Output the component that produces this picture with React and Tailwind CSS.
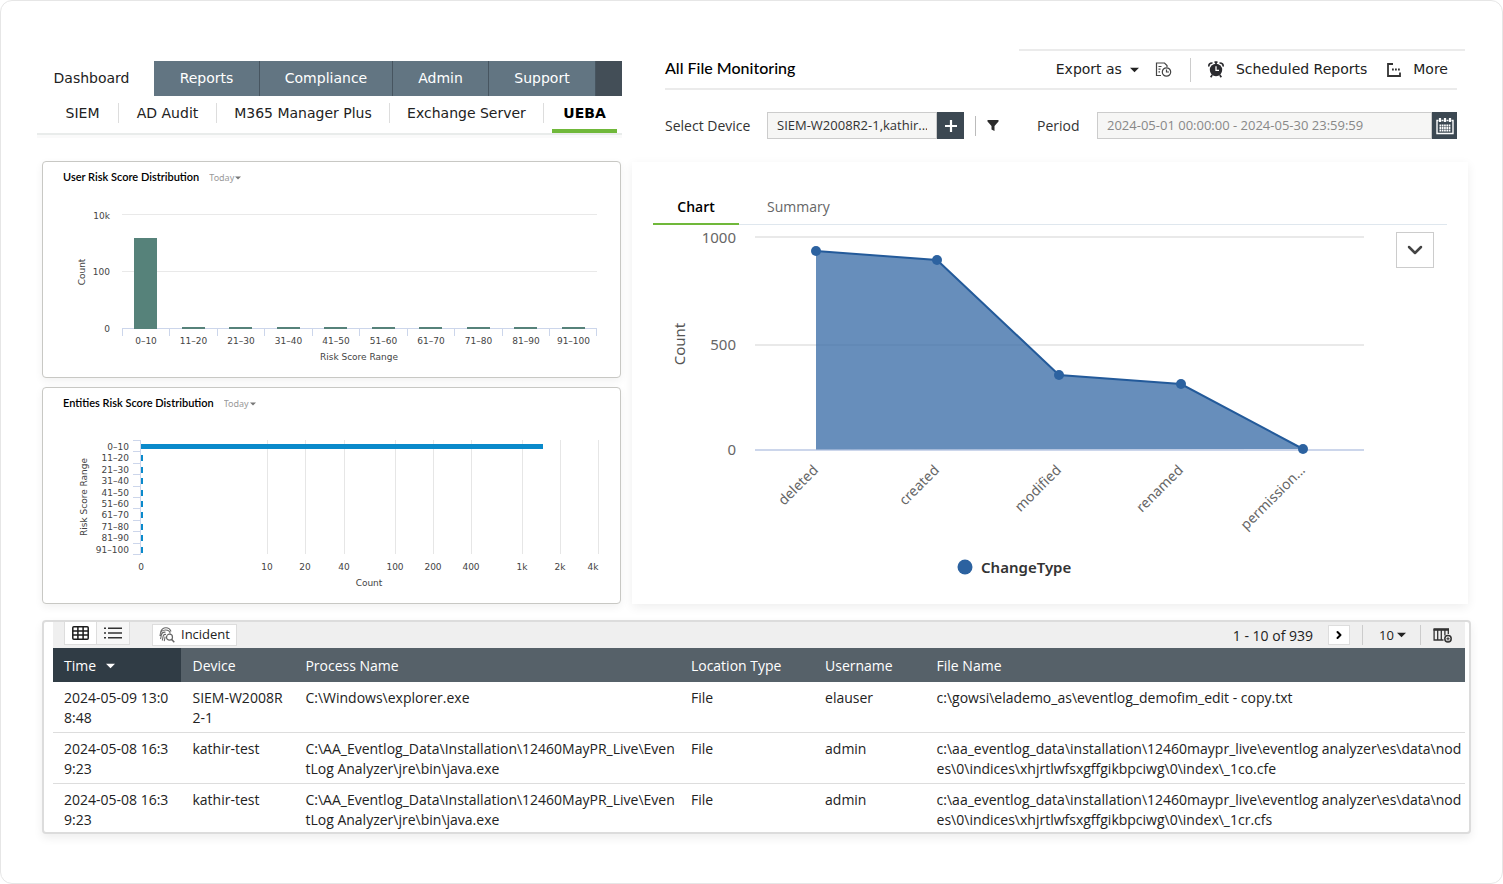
import React from 'react';
import { ChevronDown, ChevronRight } from 'lucide-react';

const mainTabs = ['Reports', 'Compliance', 'Admin', 'Support'];
const subTabs = ['SIEM', 'AD Audit', 'M365 Manager Plus', 'Exchange Server'];

const ranges = ['0–10', '11–20', '21–30', '31–40', '41–50', '51–60', '61–70', '71–80', '81–90', '91–100'];

const entityTicks = [
  { label: '10', x: 224 },
  { label: '20', x: 262 },
  { label: '40', x: 301 },
  { label: '100', x: 352 },
  { label: '200', x: 390 },
  { label: '400', x: 428 },
  { label: '1k', x: 479 },
  { label: '2k', x: 517 },
  { label: '4k', x: 555, labelX: 550 },
];

const changePoints = [
  { label: 'deleted', x: 184, y: 26 },
  { label: 'created', x: 305, y: 35 },
  { label: 'modified', x: 427, y: 150 },
  { label: 'renamed', x: 549, y: 159 },
  { label: 'permission...', x: 671, y: 224 },
];

const columns = ['Time', 'Device', 'Process Name', 'Location Type', 'Username', 'File Name'];

const rows = [
  ['2024-05-09 13:08:48', 'SIEM-W2008R2-1', 'C:\\Windows\\explorer.exe', 'File', 'elauser', 'c:\\gowsi\\elademo_as\\eventlog_demofim_edit - copy.txt'],
  ['2024-05-08 16:39:23', 'kathir-test', 'C:\\AA_Eventlog_Data\\Installation\\12460MayPR_Live\\EventLog Analyzer\\jre\\bin\\java.exe', 'File', 'admin', 'c:\\aa_eventlog_data\\installation\\12460maypr_live\\eventlog analyzer\\es\\data\\nodes\\0\\indices\\xhjrtlwfsxgffgikbpciwg\\0\\index\\_1co.cfe'],
  ['2024-05-08 16:39:23', 'kathir-test', 'C:\\AA_Eventlog_Data\\Installation\\12460MayPR_Live\\EventLog Analyzer\\jre\\bin\\java.exe', 'File', 'admin', 'c:\\aa_eventlog_data\\installation\\12460maypr_live\\eventlog analyzer\\es\\data\\nodes\\0\\indices\\xhjrtlwfsxgffgikbpciwg\\0\\index\\_1cr.cfs'],
];

const Caret = ({ className }) => (
  <svg viewBox="0 0 10 6" className={className} fill="currentColor" aria-hidden="true">
    <path d="M0 0.5h10L5 5.5z" />
  </svg>
);

const ExportHistoryIcon = () => (
  <svg viewBox="0 0 17 16" className="w-[17px] h-4" fill="none" stroke="#444" strokeWidth="1.2" aria-hidden="true">
    <path d="M12 5V3.5L9.5 1H1.5v12.500H6" />
    <path d="M3.500 4.500h3M3.500 7.200h2M3.500 9.900h1.500" />
    <circle cx="11.500" cy="10" r="4.200" />
    <path d="M11.500 7.500V10H14" />
  </svg>
);

const AlarmIcon = () => (
  <svg viewBox="0 0 16 17" className="w-4 h-[17px]" aria-hidden="true">
    <circle cx="8" cy="9" r="6.200" fill="#2b2b2f" />
    <path d="M1 5.500C0.500 3.500 2 1.800 4.500 2M15 5.500c0.500-2-1-3.700-3.500-3.500M6.500 1.200h3" fill="none" stroke="#2b2b2f" strokeWidth="1.700" />
    <path d="M4.200 14l-1.500 2.200M11.800 14l1.500 2.200M8 1v2" stroke="#2b2b2f" strokeWidth="1.700" />
    <path d="M8 5.200V9.300h3" fill="none" stroke="#fff" strokeWidth="1.300" />
  </svg>
);

const MoreIcon = () => (
  <svg viewBox="0 0 14 14" className="w-3.5 h-3.5" fill="none" stroke="#333" strokeWidth="1.800" aria-hidden="true">
    <path d="M6 1H1v12h12V9.500" />
    <path d="M5 6.500h1.800M8 6.500h1.800M11 6.500h1.800" strokeWidth="2" />
  </svg>
);

const CalendarIcon = () => (
  <svg viewBox="0 0 18 18" className="w-[18px] h-[18px]" fill="none" stroke="#fff" aria-hidden="true">
    <path d="M2.500 3.500H1v13h16v-13h-1.500M5.500 3.500h2M10.500 3.500h2" strokeWidth="1.400" />
    <path d="M4 1v4M9 1v4M14 1v4" strokeWidth="2.200" />
    <path d="M3.500 8.500h11M3.500 11h11M3.500 13.500h11" strokeWidth="2" strokeDasharray="1.700 0.600" />
  </svg>
);

const GridIcon = () => (
  <svg viewBox="0 0 17 14" className="w-[17px] h-3.5" fill="none" stroke="#1c1c1c" strokeWidth="1.500" aria-hidden="true">
    <rect x="0.800" y="0.800" width="15.400" height="12.400" rx="1" />
    <path d="M1 4.900h15M1 9h15M5.900 1v12M11.100 1v12" />
  </svg>
);

const ListIcon = () => (
  <svg viewBox="0 0 18 12" className="w-[18px] h-3" fill="none" stroke="#333" strokeWidth="1.600" aria-hidden="true">
    <path d="M0 1.200h2M0 6h2M0 10.800h2M4 1.200h14M4 6h14M4 10.800h14" />
  </svg>
);

const IncidentIcon = () => (
  <svg viewBox="0 0 16 16" className="w-4 h-4" fill="none" stroke="#666" strokeWidth="1.100" aria-hidden="true">
    <path d="M1.500 5.500C2.500 2 5 0.800 7 0.800s4 1 5 3.700M1 9c0-4 2.500-6 5.500-6S11 5 11.200 6.500M1.500 12c0.600-1.500 0.500-3 0.800-4C2.800 6 4.500 5 6.500 5.200M3.200 13.500c0.800-2 0.600-4 1.200-5C5 7.500 6 7.300 7 7.500M5.200 14.200c0.400-1.200 0.600-3 0.900-4.500" />
    <circle cx="10.500" cy="10.200" r="3" fill="#fff" strokeWidth="1.200" />
    <path d="M12.700 12.400l2.600 2.800" strokeWidth="1.500" />
  </svg>
);

const ColumnsIcon = () => (
  <svg viewBox="0 0 20 15" className="w-5 h-[15px]" fill="none" stroke="#333" strokeWidth="1.300" aria-hidden="true">
    <path d="M0.500 1.500h15.500" strokeWidth="2.600" />
    <path d="M1.100 1v11h9.400M4.700 2v10M8.300 2v10M11.900 2v5.500M15.300 2v4" />
    <circle cx="15" cy="10.800" r="3.200" strokeWidth="1.500" />
    <path d="M15 9.200v3.200M13.400 10.800h3.200" strokeWidth="1.100" />
  </svg>
);

const TodaySelect = ({ id }) => (
  <div className="relative flex items-center pt-0.5">
    <select id={id} aria-label="Time range" className="appearance-none w-9 h-4 font-['Noto_Sans',sans-serif] text-[9px] leading-4 text-[#999]">
      <option>Today</option>
    </select>
    <Caret className="absolute right-1 w-1.5 h-1 text-[#777] pointer-events-none" />
  </div>
);

const WidgetCard = ({ id, title, children }) => (
  <section className="bg-white border border-[#c8c8c4] rounded-sm shadow-[0_3px_8px_rgba(0,0,0,0.06)]">
    <div className="flex items-center gap-2.5 h-[30px] pl-5">
      <h2 className="font-['Lato',sans-serif] text-[11px] font-semibold text-black">{title}</h2>
      <TodaySelect id={id} />
    </div>
    {children}
  </section>
);

const UserRiskChart = () => (
  <svg viewBox="0 0 577 185" className="block w-full h-auto font-['DejaVu_Sans',sans-serif] text-[9px]" fill="#444">
    <path d="M79 22.500h475M79 79.500h475" stroke="#e9e9e9" />
    <path d="M79 136.500h475" stroke="#ccd6eb" />
    {ranges.map((range, i) => {
      const x = 79 + i * 47.5;
      return (
        <g key={range}>
          <path d={`M${Math.floor(x) + 0.5} 137v7`} stroke="#ccd6eb" />
          <rect x={Math.floor(x + 12.5)} y={i === 0 ? 46 : 135} width="23" height={i === 0 ? 91 : 2} fill="#56827a" />
          <text x={x + 24} y="152" textAnchor="middle">{range}</text>
        </g>
      );
    })}
    <path d="M553.500 137v7" stroke="#ccd6eb" />
    <text x="67" y="27" textAnchor="end">10k</text>
    <text x="67" y="83" textAnchor="end">100</text>
    <text x="67" y="140" textAnchor="end">0</text>
    <text transform="translate(42 80) rotate(-90)" textAnchor="middle">Count</text>
    <text x="316" y="168" textAnchor="middle">Risk Score Range</text>
  </svg>
);

const EntityRiskChart = () => (
  <svg viewBox="0 0 577 185" className="block w-full h-auto font-['DejaVu_Sans',sans-serif] text-[9px]" fill="#444">
    {entityTicks.map(({ label, x, labelX }) => (
      <g key={label}>
        <path d={`M${x + 0.5} 22v114`} stroke="#e6e6e6" />
        <text x={labelX || x} y="152" textAnchor="middle">{label}</text>
      </g>
    ))}
    <path d="M97.500 22v115" stroke="#ccd6eb" />
    {ranges.map((range, i) => {
      const y = 22 + i * 11.4;
      return (
        <g key={range}>
          <path d={`M90 ${Math.round(y) + 0.5}h8`} stroke="#ccd6eb" />
          <text x="86" y={y + 10} textAnchor="end">{range}</text>
          <rect x="98" y={Math.round(y + 4)} width={i === 0 ? 402 : 2} height={i === 0 ? 5 : 6} fill="#0a8acb" />
        </g>
      );
    })}
    <path d="M90 136.500h8" stroke="#ccd6eb" />
    <text x="98" y="152" textAnchor="middle">0</text>
    <text transform="translate(44 79) rotate(-90)" textAnchor="middle">Risk Score Range</text>
    <text x="326" y="168" textAnchor="middle">Count</text>
  </svg>
);

const ChangeTypeChart = () => {
  const line = changePoints.map(({ x, y }) => `${x},${y}`).join(' ');
  return (
    <svg viewBox="0 0 836 378" className="block w-full h-auto font-['Noto_Sans',sans-serif] text-[15px]" fill="#666">
      <path d="M123 12h609M123 120h609" stroke="#e9e9e9" strokeWidth="2" />
      <path d="M123 225h609" stroke="#ccd6eb" strokeWidth="2" />
      <polygon points={`184,224.500 ${line}`} fill="#3468a4" fillOpacity="0.75" />
      <polyline points={line} fill="none" stroke="#235a9a" strokeWidth="2" />
      {changePoints.map(({ label, x, y }) => (
        <g key={label}>
          <circle cx={x} cy={y} r="5" fill="#2c62a0" />
          <text transform={`translate(${x + 3} 246) rotate(-45)`} textAnchor="end" className="text-[14px]">{label}</text>
        </g>
      ))}
      <text x="104" y="18" textAnchor="end">1000</text>
      <text x="104" y="125" textAnchor="end">500</text>
      <text x="104" y="230" textAnchor="end">0</text>
      <text transform="translate(53 119) rotate(-90)" textAnchor="middle" fill="#555">Count</text>
      <circle cx="333" cy="342" r="7.500" fill="#2c62a0" />
      <text x="349" y="348" className="font-semibold" fill="#333">ChangeType</text>
    </svg>
  );
};

const Navigation = () => (
  <nav className="mt-3 font-['DejaVu_Sans',sans-serif] text-[14px]">
    <div className="grid grid-cols-[117fr_106fr_133fr_96fr_107fr_26fr] h-[35px] text-center leading-[34px]">
      <a href="#dashboard" className="pr-2 text-[#222]">Dashboard</a>
      {mainTabs.map((tab) => (
        <a key={tab} href={`#${tab}`} className="bg-[#627582] border-r border-[#475560] text-white">{tab}</a>
      ))}
      <div className="bg-[#434e57]"></div>
    </div>
    <div className="grid grid-cols-[82fr_98fr_173fr_154fr_73fr_5fr] items-center h-[39px] border-b-2 border-[#e9eceb] text-center text-[#222] shadow-[0_3px_1px_rgba(0,0,0,0.02)]">
      {subTabs.map((tab) => (
        <a key={tab} href={`#${tab}`} className="mb-1 border-r border-[#ddd] leading-5 first:pl-2.5">{tab}</a>
      ))}
      <a href="#UEBA" className="self-end ml-2 h-[37px] leading-[34px] border-b-4 border-[#70b83a] font-bold text-black">UEBA</a>
    </div>
  </nav>
);

const ReportHeader = () => (
  <div>
    <div className="ml-auto w-[446px] border-t-2 border-[#ebebeb]"></div>
    <div className="flex items-center justify-between h-[39px] mr-2 border-b-2 border-[#ebebeb]">
      <h1 className="pb-1 font-['Lato',sans-serif] text-[16px] font-medium text-black">All File Monitoring</h1>
      <div className="flex items-center mr-[9px] font-['DejaVu_Sans',sans-serif] text-[14px] text-[#222]">
        <button className="flex items-center gap-2">
          Export as
          <Caret className="w-[9px] h-1.5" />
        </button>
        <button aria-label="Export history" className="ml-4"><ExportHistoryIcon /></button>
        <span className="w-px h-6 ml-[18px] mr-[17px] bg-[#ccc]"></span>
        <button className="flex items-center gap-3"><AlarmIcon />Scheduled Reports</button>
        <button className="flex items-center gap-3 ml-5"><MoreIcon />More</button>
      </div>
    </div>
    <div className="flex items-center h-[27px] mt-[22px] mr-2 font-['Open_Sans',sans-serif] text-[14px] text-[#333]">
      <label htmlFor="device" className="w-[102px] shrink-0">Select Device</label>
      <input id="device" readOnly value="SIEM-W2008R2-1,kathir..." className="w-[170px] h-full px-[9px] pb-0.5 bg-[#f6f6f5] border border-[#ccc] text-[13px]" />
      <button aria-label="Add device" className="flex items-center justify-center w-[27px] h-full bg-[#3c4852]">
        <svg viewBox="0 0 12 12" className="w-3 h-3" stroke="#fff" strokeWidth="2.200"><path d="M6 0v12M0 6h12" /></svg>
      </button>
      <span className="w-px h-5 mx-[11px] bg-[#bbb]"></span>
      <button aria-label="Filter">
        <svg viewBox="0 0 12 11" className="w-3 h-[11px]" fill="#2b2b2b"><path d="M0.500 0h11v1.500L7.500 6v5L4.500 9.500V6L0.500 1.500z" /></svg>
      </button>
      <label htmlFor="period" className="w-[60px] ml-[38px] shrink-0">Period</label>
      <input id="period" readOnly value="2024-05-01 00:00:00 - 2024-05-30 23:59:59" className="flex-1 min-w-0 h-full px-[9px] pb-0.5 bg-[#f6f6f5] border border-[#ccc] text-[13px] text-[#888]" />
      <button aria-label="Pick period" className="flex items-center justify-center w-[25px] h-full bg-[#3c4852]"><CalendarIcon /></button>
    </div>
  </div>
);

const ChartPanel = () => (
  <section className="relative mt-px bg-white shadow-[0_3px_10px_rgba(0,0,0,0.07)] font-['Open_Sans',sans-serif]">
    <div className="pt-7 px-[21px]">
      <div className="flex h-[35px] border-b border-[#dfe7ee] text-[14px] leading-[34px]">
        <button className="w-[86px] h-[35px] border-b-2 border-[#70b83a] font-semibold text-black">Chart</button>
        <button className="ml-7 text-[#666]">Summary</button>
      </div>
    </div>
    <ChangeTypeChart />
    <button aria-label="Chart options" className="absolute top-[70px] right-[34px] flex items-center justify-center w-[38px] h-9 bg-white border border-[#ccc]">
      <ChevronDown className="w-6 h-6 text-[#444]" strokeWidth={2.5} />
    </button>
  </section>
);

const EventTable = () => (
  <section className="mt-4 mr-[-3px] pl-[9px] pr-1 bg-white border-2 border-[#dcdcdc] rounded-sm shadow-[0_4px_10px_rgba(0,0,0,0.07)] font-['Open_Sans',sans-serif] text-[14px] text-[#222]">
    {/* Toolbar */}
    <div className="flex items-center h-[26px] pl-[11px] pr-3 bg-[#efefef]">
      <div className="flex self-start h-[23px] border border-t-0 border-[#ddd]">
        <button aria-label="Table view" className="flex items-center justify-center w-8 bg-white border-r border-[#ddd]"><GridIcon /></button>
        <button aria-label="List view" className="flex items-center justify-center w-8 bg-[#f7f7f7]"><ListIcon /></button>
      </div>
      <button className="flex items-center gap-1.5 h-[22px] ml-[22px] px-[6px] bg-white border border-[#ddd] text-[13px]"><IncidentIcon />Incident</button>
      <span className="ml-auto">1 - 10 of 939</span>
      <button aria-label="Next page" className="flex items-center justify-center w-[22px] h-5 ml-[15px] bg-white border border-[#ddd]">
        <ChevronRight className="w-3 h-3 text-black" strokeWidth={4} />
      </button>
      <span className="w-px h-5 mx-3 bg-[#ccc]"></span>
      <div className="relative flex items-center ml-1">
        <select id="page-size" aria-label="Rows per page" className="appearance-none w-8 h-5 text-[13px] leading-5"><option>10</option></select>
        <Caret className="absolute right-[5px] w-[9px] h-1.5 pointer-events-none" />
      </div>
      <span className="w-px h-5 ml-[9px] mr-3 bg-[#ccc]"></span>
      <button aria-label="Add columns"><ColumnsIcon /></button>
    </div>
    <table className="w-full table-fixed border-collapse text-left">
      <colgroup>
        <col className="w-[9.1%]" />
        <col className="w-[8%]" />
        <col className="w-[27.3%]" />
        <col className="w-[9.5%]" />
        <col className="w-[7.9%]" />
        <col className="w-[38.2%]" />
      </colgroup>
      <thead>
        <tr className="h-[34px] bg-[#566169] text-white">
          {columns.map((column) => (
            <th key={column} className="pl-[11px] font-medium whitespace-nowrap first:bg-[#303c45]">
              {column}
              {column === 'Time' && <Caret className="inline-block w-[9px] h-1.5 ml-2.5 mb-0.5" />}
            </th>
          ))}
        </tr>
      </thead>
      <tbody>
        {rows.map((row, i) => (
          <tr key={i} className="border-b border-[#ddd] last:border-b-0 [&:last-child>td]:pb-0.5">
            {row.map((cell, j) => (
              <td key={j} className="pl-[11px] pr-1 first:pr-2 last:pr-0 pt-1.5 pb-1 leading-5 break-all align-top">{cell}</td>
            ))}
          </tr>
        ))}
      </tbody>
    </table>
  </section>
);

const App = () => {
  return (
    <div className="min-h-screen bg-white border border-[#e6e6e6] rounded-xl pt-12 pb-12">
      <header className="grid grid-cols-[minmax(0,585fr)_minmax(0,800fr)] gap-[43px] pl-9 pr-[37px]">
        <Navigation />
        <ReportHeader />
      </header>
      <main className="mt-[22px] pl-[41px] pr-[34px]">
        <div className="grid grid-cols-[minmax(0,579fr)_minmax(0,836fr)] gap-[11px]">
          <div className="flex flex-col gap-[9px]">
            <WidgetCard id="user-range" title="User Risk Score Distribution">
              <UserRiskChart />
            </WidgetCard>
            <WidgetCard id="entity-range" title="Entities Risk Score Distribution">
              <EntityRiskChart />
            </WidgetCard>
          </div>
          <ChartPanel />
        </div>
        <EventTable />
      </main>
    </div>
  );
};

export default App;
